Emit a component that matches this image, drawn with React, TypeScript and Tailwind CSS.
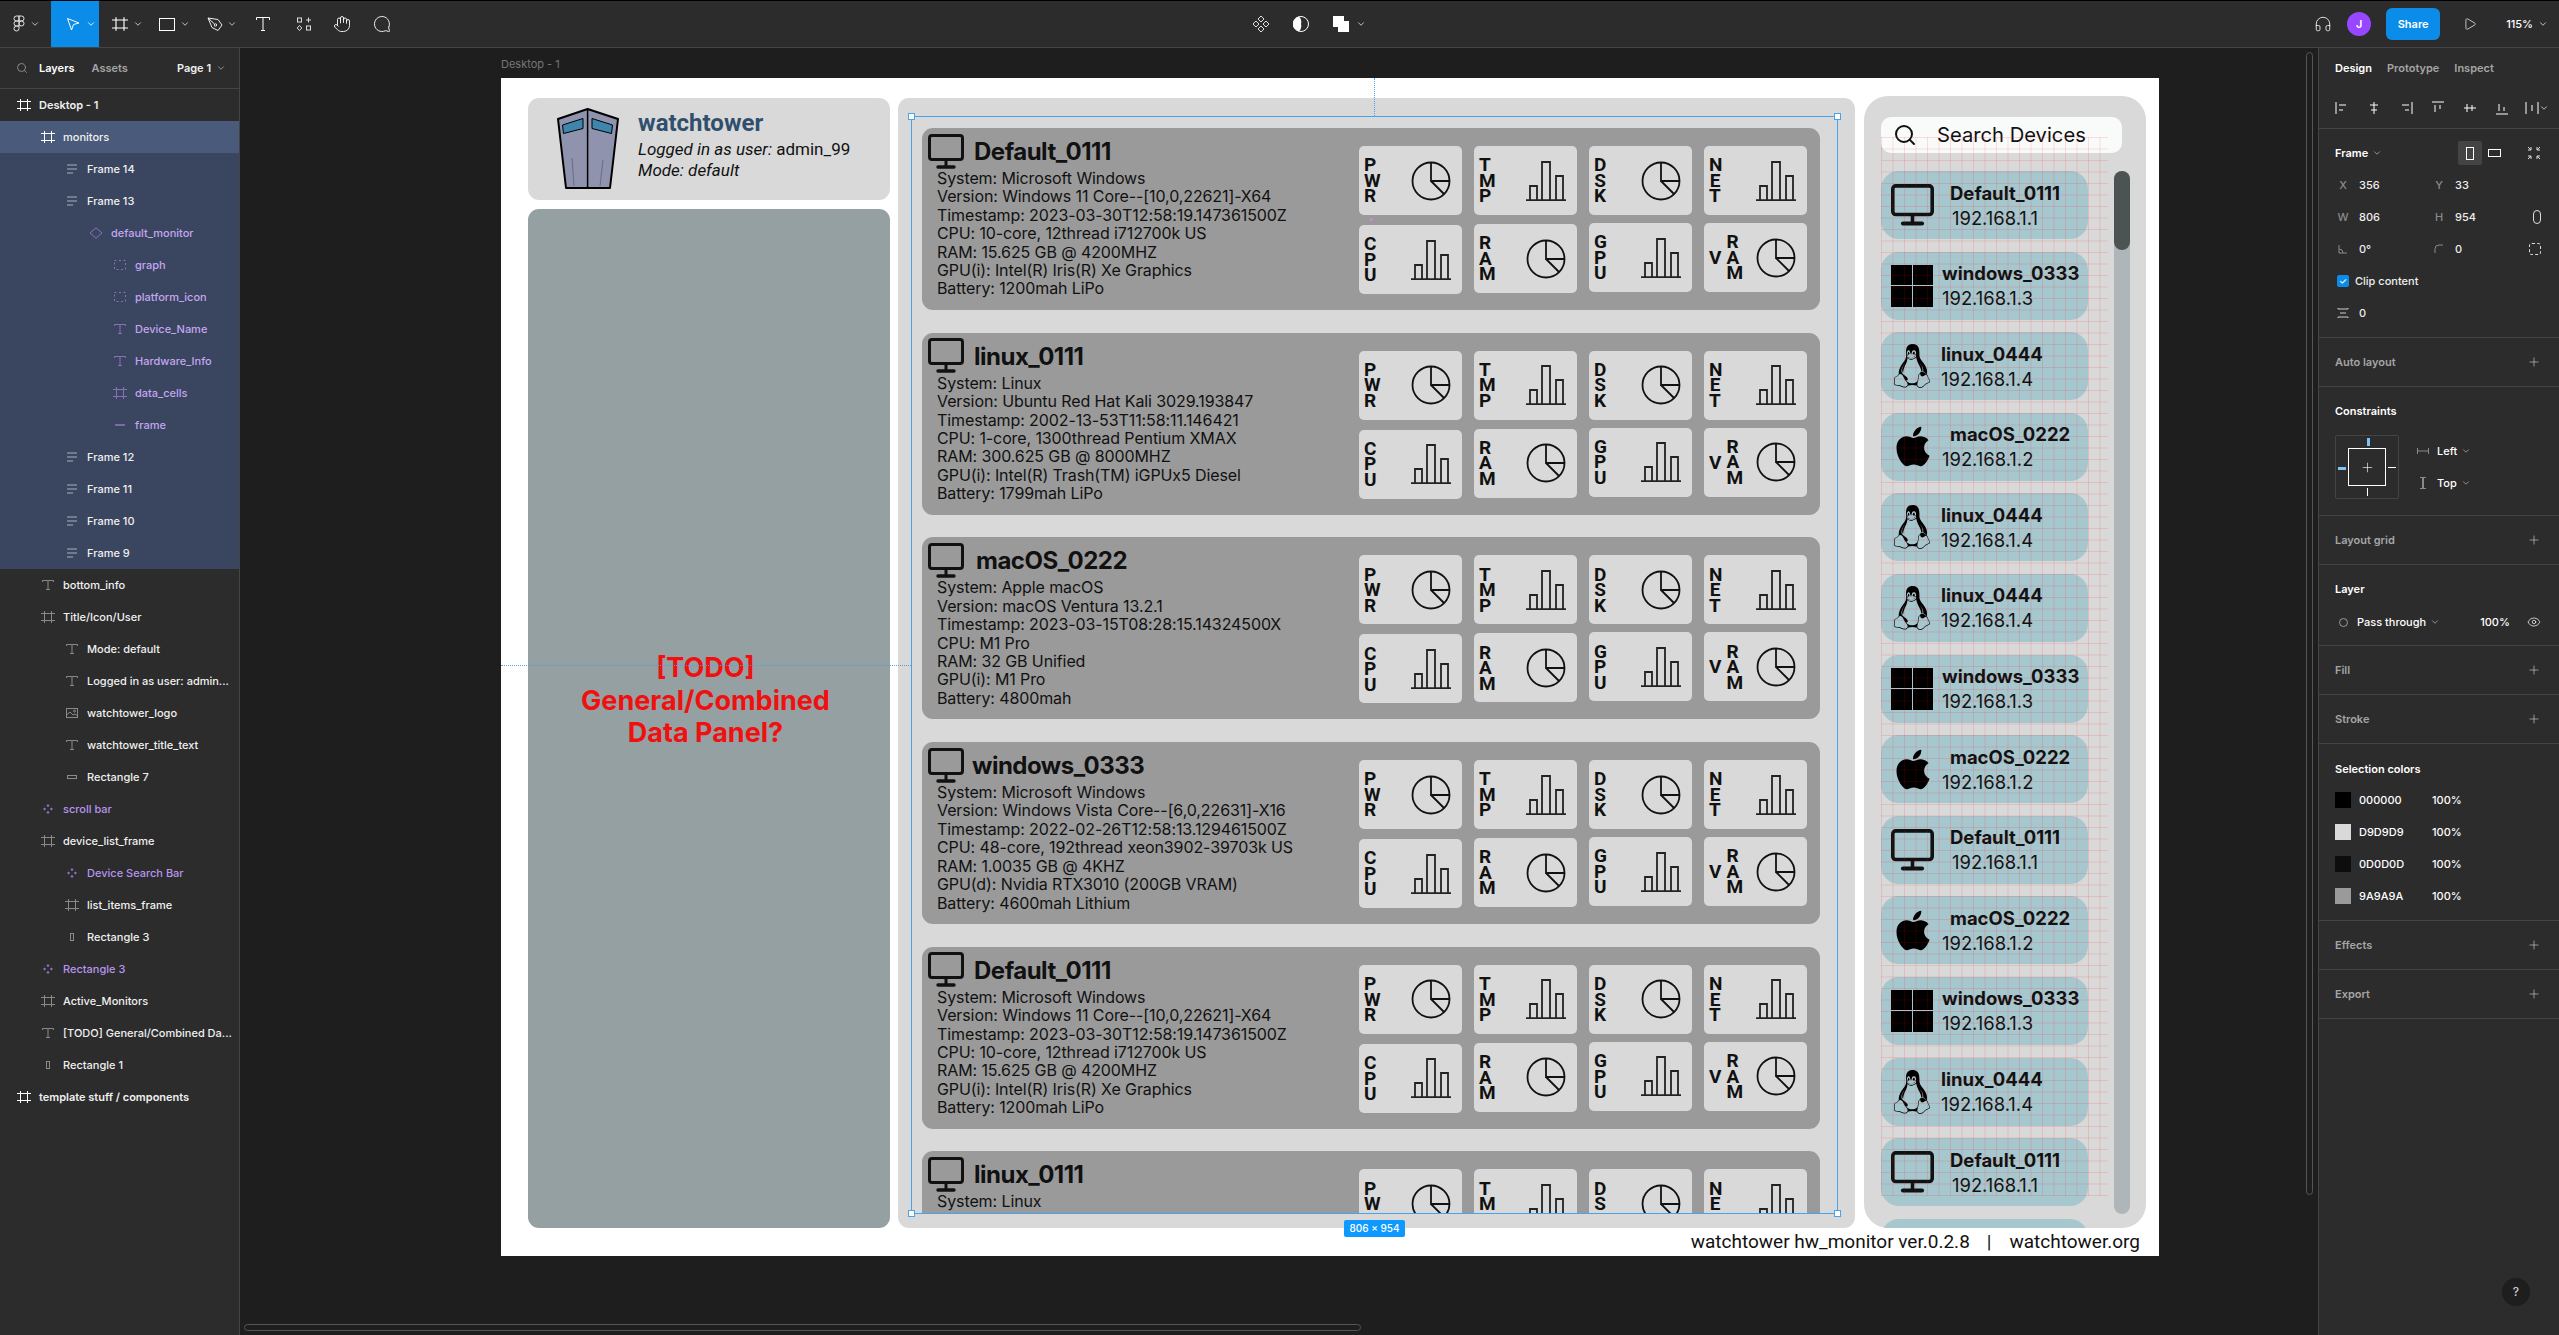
import { ReactNode } from "react";
import {
  ChevronDown,
  Eye,
  Hand,
  Headphones,
  MessageCircle,
  Play,
  Plus,
  Search,
} from "lucide-react";
import { FaApple } from "react-icons/fa";
import { SiLinux } from "react-icons/si";

type Platform = "default" | "windows" | "linux" | "mac";

const monitors = [
  {
    name: "Default_0111",
    gap: "ml-[10px]",
    lines: [
      "System: Microsoft Windows",
      "Version: Windows 11 Core--[10,0,22621]-X64",
      "Timestamp: 2023-03-30T12:58:19.147361500Z",
      "CPU: 10-core, 12thread i712700k US",
      "RAM: 15.625 GB @ 4200MHZ",
      "GPU(i): Intel(R) Iris(R) Xe Graphics",
      "Battery: 1200mah LiPo",
    ],
  },
  {
    name: "linux_0111",
    gap: "ml-[10px]",
    lines: [
      "System: Linux",
      "Version: Ubuntu Red Hat Kali 3029.193847",
      "Timestamp: 2002-13-53T11:58:11.146421",
      "CPU: 1-core, 1300thread Pentium XMAX",
      "RAM: 300.625 GB @ 8000MHZ",
      "GPU(i): Intel(R) Trash(TM) iGPUx5 Diesel",
      "Battery: 1799mah LiPo",
    ],
  },
  {
    name: "macOS_0222",
    gap: "ml-[12px]",
    lines: [
      "System: Apple macOS",
      "Version: macOS Ventura 13.2.1",
      "Timestamp: 2023-03-15T08:28:15.14324500X",
      "CPU: M1 Pro",
      "RAM: 32 GB Unified",
      "GPU(i): M1 Pro",
      "Battery: 4800mah",
    ],
  },
  {
    name: "windows_0333",
    gap: "ml-[8px]",
    lines: [
      "System: Microsoft Windows",
      "Version: Windows Vista Core--[6,0,22631]-X16",
      "Timestamp: 2022-02-26T12:58:13.129461500Z",
      "CPU: 48-core, 192thread xeon3902-39703k US",
      "RAM: 1.0035 GB @ 4KHZ",
      "GPU(d): Nvidia RTX3010 (200GB VRAM)",
      "Battery: 4600mah Lithium",
    ],
  },
  {
    name: "Default_0111",
    gap: "ml-[10px]",
    lines: [
      "System: Microsoft Windows",
      "Version: Windows 11 Core--[10,0,22621]-X64",
      "Timestamp: 2023-03-30T12:58:19.147361500Z",
      "CPU: 10-core, 12thread i712700k US",
      "RAM: 15.625 GB @ 4200MHZ",
      "GPU(i): Intel(R) Iris(R) Xe Graphics",
      "Battery: 1200mah LiPo",
    ],
  },
  {
    name: "linux_0111",
    gap: "ml-[10px]",
    lines: ["System: Linux"],
  },
];

const devices: { p: Platform; name: string; ip: string }[] = [
  { p: "default", name: "Default_0111", ip: "192.168.1.1" },
  { p: "windows", name: "windows_0333", ip: "192.168.1.3" },
  { p: "linux", name: "linux_0444", ip: "192.168.1.4" },
  { p: "mac", name: "macOS_0222", ip: "192.168.1.2" },
  { p: "linux", name: "linux_0444", ip: "192.168.1.4" },
  { p: "linux", name: "linux_0444", ip: "192.168.1.4" },
  { p: "windows", name: "windows_0333", ip: "192.168.1.3" },
  { p: "mac", name: "macOS_0222", ip: "192.168.1.2" },
  { p: "default", name: "Default_0111", ip: "192.168.1.1" },
  { p: "mac", name: "macOS_0222", ip: "192.168.1.2" },
  { p: "windows", name: "windows_0333", ip: "192.168.1.3" },
  { p: "linux", name: "linux_0444", ip: "192.168.1.4" },
  { p: "default", name: "Default_0111", ip: "192.168.1.1" },
  { p: "default", name: "", ip: "" },
];

type LayerKind = "frame" | "lines" | "diamond" | "dash" | "text" | "line" | "image" | "rect" | "tall" | "comp";

const layers: { label: string; level: number; kind: LayerKind; sel?: 1 | 2; purple?: boolean; bold?: boolean }[] = [
  { label: "Desktop - 1", level: 0, kind: "frame", bold: true },
  { label: "monitors", level: 1, kind: "frame", sel: 1 },
  { label: "Frame 14", level: 2, kind: "lines", sel: 2 },
  { label: "Frame 13", level: 2, kind: "lines", sel: 2 },
  { label: "default_monitor", level: 3, kind: "diamond", sel: 2, purple: true },
  { label: "graph", level: 4, kind: "dash", sel: 2, purple: true },
  { label: "platform_icon", level: 4, kind: "dash", sel: 2, purple: true },
  { label: "Device_Name", level: 4, kind: "text", sel: 2, purple: true },
  { label: "Hardware_Info", level: 4, kind: "text", sel: 2, purple: true },
  { label: "data_cells", level: 4, kind: "frame", sel: 2, purple: true },
  { label: "frame", level: 4, kind: "line", sel: 2, purple: true },
  { label: "Frame 12", level: 2, kind: "lines", sel: 2 },
  { label: "Frame 11", level: 2, kind: "lines", sel: 2 },
  { label: "Frame 10", level: 2, kind: "lines", sel: 2 },
  { label: "Frame 9", level: 2, kind: "lines", sel: 2 },
  { label: "bottom_info", level: 1, kind: "text" },
  { label: "Title/Icon/User", level: 1, kind: "frame" },
  { label: "Mode: default", level: 2, kind: "text" },
  { label: "Logged in as user: admin...", level: 2, kind: "text" },
  { label: "watchtower_logo", level: 2, kind: "image" },
  { label: "watchtower_title_text", level: 2, kind: "text" },
  { label: "Rectangle 7", level: 2, kind: "rect" },
  { label: "scroll bar", level: 1, kind: "comp", purple: true },
  { label: "device_list_frame", level: 1, kind: "frame" },
  { label: "Device Search Bar", level: 2, kind: "comp", purple: true },
  { label: "list_items_frame", level: 2, kind: "frame" },
  { label: "Rectangle 3", level: 2, kind: "tall" },
  { label: "Rectangle 3", level: 1, kind: "comp", purple: true },
  { label: "Active_Monitors", level: 1, kind: "frame" },
  { label: "[TODO] General/Combined Da...", level: 1, kind: "text" },
  { label: "Rectangle 1", level: 1, kind: "tall" },
  { label: "template stuff / components", level: 0, kind: "frame", bold: true },
];

function FrameGlyph({ className = "" }: { className?: string }) {
  return (
    <svg viewBox="0 0 14 12" className={`h-[12px] w-[14px] ${className}`} fill="none" stroke="currentColor" strokeWidth="1">
      <path d="M3.5 0v12M10.5 0v12M0 2.5h14M0 9.5h14" />
    </svg>
  );
}

function LayerIcon({ kind, bold, sel, purple }: { kind: LayerKind; bold?: boolean; sel?: 1 | 2; purple?: boolean }) {
  const color = bold ? "text-white" : purple ? "text-[#8a70b8]" : sel === 1 ? "text-white" : sel === 2 ? "text-[#aab0c0]" : "text-[#8a8a8a]";
  if (kind === "frame") return <FrameGlyph className={color} />;
  if (kind === "lines") {
    return (
      <svg viewBox="0 0 12 10" className={`h-[10px] w-[12px] ${color}`} fill="none" stroke="currentColor" strokeWidth="1.2">
        <path d="M1 1h10M1 5h10M1 9h6" />
      </svg>
    );
  }
  if (kind === "diamond") {
    return (
      <svg viewBox="0 0 14 12" className={`h-[12px] w-[14px] ${color}`} fill="none" stroke="currentColor">
        <path d="M7 .8 13 6 7 11.2 1 6z" />
      </svg>
    );
  }
  if (kind === "dash") {
    return (
      <svg viewBox="0 0 12 10" className={`h-[10px] w-[12px] ${color}`} fill="none" stroke="currentColor" strokeDasharray="2 2.5">
        <rect x=".5" y=".5" width="11" height="9" />
      </svg>
    );
  }
  if (kind === "text") {
    return (
      <svg viewBox="0 0 12 10" className={`h-[10px] w-[12px] ${color}`} fill="none" stroke="currentColor">
        <path d="M.5 2V.5h11V2M6 .5v9M4 9.5h4" />
      </svg>
    );
  }
  if (kind === "line") return <span className="h-[2px] w-[10px] bg-[#7d6aa6]" />;
  if (kind === "image") {
    return (
      <svg viewBox="0 0 12 10" className={`h-[10px] w-[12px] ${color}`} fill="none" stroke="currentColor">
        <rect x=".5" y=".5" width="11" height="9" />
        <path d="M.5 7 4 4l3 3 2-1 2.5 2" />
        <circle cx="8.5" cy="3" r="1" />
      </svg>
    );
  }
  if (kind === "rect") return <span className="h-[4px] w-[10px] border border-[#8a8a8a]" />;
  if (kind === "tall") return <span className="h-[8px] w-[4px] border border-[#8a8a8a]" />;
  return (
    <svg viewBox="0 0 12 12" className={`h-[12px] w-[12px] ${color}`} fill="currentColor">
      <path d="M6 1 7.6 2.6 6 4.2 4.4 2.6zM2.6 4.4 4.2 6 2.6 7.6 1 6zM9.4 4.4 11 6 9.4 7.6 7.8 6zM6 7.8 7.6 9.4 6 11 4.4 9.4z" />
    </svg>
  );
}

function Sidebar() {
  return (
    <aside className="flex w-[240px] shrink-0 flex-col border-r border-[#444] bg-[#2c2c2c] text-[11px] font-medium text-white">
      <div className="flex h-[41px] items-center border-b border-[#444] text-[#eee]">
        <Search className="ml-[16px] h-[12px] w-[12px] text-[#8a8a8a]" />
        <span className="ml-[11px] font-semibold text-white">Layers</span>
        <span className="ml-[17px] font-semibold text-[#a5a5a5]">Assets</span>
        <span className="ml-[49px] font-semibold">Page 1</span>
        <ChevronDown className="ml-[5px] h-[10px] w-[10px] text-[#a5a5a5]" />
      </div>
      <div>
        {layers.map((l, i) => {
          const bg = l.sel === 1 ? "bg-[#4a5a7a]" : l.sel === 2 ? "bg-[#3a4560]" : "";
          const text = l.purple ? (l.sel ? "text-[#c4a5f0]" : "text-[#b794f0]") : "text-[#f0f0f0]";
          const pad = ["pl-[16px]", "pl-[40px]", "pl-[64px]", "pl-[88px]", "pl-[112px]"][l.level];
          return (
            <div key={i} className={`flex h-[32px] items-center ${pad} ${bg}`}>
              <span className="flex w-[15px] items-center justify-center">
                <LayerIcon kind={l.kind} bold={l.bold} sel={l.sel} purple={l.purple} />
              </span>
              <span className={`ml-[8px] whitespace-nowrap ${text} ${l.bold ? "font-semibold" : ""}`}>{l.label}</span>
            </div>
          );
        })}
      </div>
    </aside>
  );
}

function Chev({ className = "" }: { className?: string }) {
  return <ChevronDown className={`h-[10px] w-[10px] text-[#ddd] ${className}`} />;
}

function Toolbar() {
  return (
    <header className="flex h-[48px] shrink-0 items-center border-y border-t-black border-b-[#444] bg-[#2c2c2c] text-white">
      <div className="flex h-full w-[51px] items-center pl-[13px]">
        <svg viewBox="0 0 12 18" className="h-[18px] w-[12px]" fill="none" stroke="#e5e5e5" strokeWidth="1">
          <path d="M6 1H3.5a2.5 2.5 0 0 0 0 5H6zM6 1h2.5a2.5 2.5 0 0 1 0 5H6zM6 6H3.5a2.5 2.5 0 0 0 0 5H6zM6 8.5a2.5 2.5 0 1 0 5 0 2.5 2.5 0 1 0-5 0zM6 11H3.5A2.5 2.5 0 1 0 6 13.5z" />
        </svg>
        <Chev className="ml-[5px]" />
      </div>
      <div className="flex h-full w-[48px] items-center bg-[#0c8ce9] pl-[15px]">
        <svg viewBox="0 0 14 14" className="h-[14px] w-[14px]" fill="none" stroke="#fff">
          <path d="M1.5 1.5 13 6 7.5 7.5 5.5 13z" />
        </svg>
        <Chev className="ml-[6px] text-white" />
      </div>
      <div className="flex h-full w-[47px] items-center pl-[13px]">
        <FrameGlyph className="h-[14px] w-[16px] text-white" />
        <Chev className="ml-[5px]" />
      </div>
      <div className="flex h-full w-[48px] items-center pl-[13px]">
        <span className="h-[13px] w-[16px] border border-white" />
        <Chev className="ml-[5px]" />
      </div>
      <div className="flex h-full w-[47px] items-center pl-[13px]">
        <svg viewBox="0 0 16 16" className="h-[16px] w-[16px]" fill="none" stroke="#eee">
          <path d="M1 2 11 3.5 15 9 11 14.5 5 11.5zM1 2l6.5 6" />
          <circle cx="8.5" cy="9" r="1.2" />
        </svg>
        <Chev className="ml-[4px]" />
      </div>
      <div className="flex h-full w-[44px] items-center justify-center">
        <svg viewBox="0 0 14 14" className="h-[14px] w-[14px]" fill="none" stroke="#fff">
          <path d="M.5 3V.5h13V3M7 .5v13M5 13.5h4" />
        </svg>
      </div>
      <div className="flex h-full w-[38px] items-center justify-center">
        <svg viewBox="0 0 16 14" className="h-[14px] w-[16px]" fill="none" stroke="#ddd">
          <rect x="1.5" y="1" width="4" height="4" />
          <rect x="10.5" y="9" width="4" height="4" />
          <path d="M12.5 .5v5M10 3h5M3.5 8.5 5.8 11 3.5 13.5 1.2 11z" />
        </svg>
      </div>
      <div className="flex h-full w-[38px] items-center justify-center">
        <Hand className="h-[18px] w-[18px]" strokeWidth={1.2} />
      </div>
      <div className="flex h-full w-[42px] items-center justify-center">
        <MessageCircle className="h-[18px] w-[18px] -scale-x-100" strokeWidth={1.2} />
      </div>
      <div className="ml-[838px] flex h-full w-[40px] items-center justify-center">
        <svg viewBox="0 0 18 18" className="h-[18px] w-[18px]" fill="none" stroke="#ddd">
          <path d="M9 1 12 4 9 7 6 4zM4 6l3 3-3 3-3-3zM14 6l3 3-3 3-3-3zM9 11l3 3-3 3-3-3z" />
        </svg>
      </div>
      <div className="flex h-full w-[40px] items-center justify-center">
        <svg viewBox="0 0 16 16" className="h-[16px] w-[16px]">
          <circle cx="8" cy="8" r="7.5" fill="none" stroke="#fff" />
          <path d="M6 .6a7.5 7.5 0 0 0 0 14.8A7.5 7.5 0 0 0 8 8 7.5 7.5 0 0 0 6 .6z" fill="#fff" />
        </svg>
      </div>
      <div className="flex h-full items-center pl-[12px]">
        <svg viewBox="0 0 16 16" className="h-[16px] w-[16px]" fill="#fff">
          <path d="M0 0h11v5h5v11H5v-5H0z" />
        </svg>
        <Chev className="ml-[7px]" />
      </div>
      <div className="ml-auto flex h-full items-center">
        <Headphones className="h-[18px] w-[18px]" strokeWidth={1.1} />
        <span className="ml-[15px] flex h-[24px] w-[24px] items-center justify-center rounded-full bg-[#9747ff] text-[11px] font-semibold">J</span>
        <span className="ml-[15px] flex h-[32px] w-[54px] items-center justify-center rounded-[6px] bg-[#0c8ce9] text-[11px] font-semibold">Share</span>
        <Play className="ml-[23px] h-[14px] w-[14px]" strokeWidth={1.2} />
        <span className="ml-[29px] text-[11px] font-medium">115%</span>
        <Chev className="ml-[5px] mr-[11px]" />
      </div>
    </header>
  );
}

function PropHeader({ label, dim, plus, h }: { label: string; dim?: boolean; plus?: boolean; h: string }) {
  return (
    <div className={`flex items-center border-b border-[#444] pl-[16px] pr-[18px] ${h}`}>
      <span className={`font-semibold ${dim ? "text-[#a5a5a5]" : "text-white"}`}>{label}</span>
      {plus && <Plus className="ml-auto h-[14px] w-[14px] text-[#ddd]" strokeWidth={1} />}
    </div>
  );
}

function PropRow({ a, b, lab, lab2, icon }: { a: string; b?: string; lab: ReactNode; lab2?: ReactNode; icon?: ReactNode }) {
  return (
    <div className="flex h-[32px] items-center">
      <span className="flex w-[24px] justify-center text-[#8a8a8a]">{lab}</span>
      <span className="w-[72px] pl-[4px] text-[#eee]">{a}</span>
      {lab2 !== undefined && <span className="flex w-[24px] justify-center text-[#8a8a8a]">{lab2}</span>}
      {b !== undefined && <span className="pl-[4px] text-[#eee]">{b}</span>}
      {icon && <span className="ml-auto mr-[18px] text-[#ddd]">{icon}</span>}
    </div>
  );
}

function RightPanel() {
  const alignPaths = ["M1 1v12M4 4h7M4 9h4", "M7 1v12M3 4h8M4 9h6", "M13 1v12M3 4h7M6 9h4", "M1 1h12M4 4v7M9 4v4", "M1 7h12M4 3v8M9 4v6", "M1 13h12M4 3v7M9 6v4"];
  return (
    <aside className="relative flex w-[241px] shrink-0 flex-col border-l border-[#444] bg-[#2c2c2c] text-[11px] font-medium text-white">
      <div className="flex h-[40px] items-center pl-[16px] font-semibold">
        <span>Design</span>
        <span className="ml-[15px] text-[#a5a5a5]">Prototype</span>
        <span className="ml-[15px] text-[#a5a5a5]">Inspect</span>
      </div>
      <div className="flex h-[41px] items-center gap-[18px] border-b border-[#444] pl-[16px] text-white">
        {alignPaths.map((d) => (
          <svg key={d} viewBox="0 0 14 14" className="h-[14px] w-[14px]" fill="none" stroke="currentColor">
            <path d={d} />
          </svg>
        ))}
        <div className="-ml-[2px] flex items-center">
          <svg viewBox="0 0 14 14" className="h-[14px] w-[14px]" fill="none" stroke="currentColor">
            <path d="M1 1v12M13 1v12M7 4v6" />
          </svg>
          <ChevronDown className="h-[10px] w-[10px] text-[#ddd]" />
        </div>
      </div>

      <div className="h-[209px] border-b border-[#444]">
        <div className="flex h-[40px] items-start pl-[16px] pt-[12px]">
          <span className="flex h-[24px] items-center font-semibold">Frame</span>
          <span className="flex h-[24px] items-center">
            <ChevronDown className="ml-[4px] h-[10px] w-[10px] text-[#a5a5a5]" />
          </span>
          <span className="ml-[76px] flex h-[24px] w-[24px] items-center justify-center rounded-[2px] bg-[#444]">
            <span className="h-[13px] w-[8px] border border-white" />
          </span>
          <span className="flex h-[24px] w-[24px] items-center justify-center">
            <span className="h-[8px] w-[13px] border border-white" />
          </span>
          <svg viewBox="0 0 14 14" className="ml-[21px] mt-[5px] h-[14px] w-[14px]" fill="none" stroke="#ddd">
            <path d="M1 1l3 3M4 1v3H1M13 1l-3 3M10 1v3h3M1 13l3-3M4 13v-3H1M13 13l-3-3M10 13v-3h3" />
          </svg>
        </div>
        <div className="pl-[12px]">
          <PropRow lab="X" a="356" lab2="Y" b="33" />
          <PropRow lab="W" a="806" lab2="H" b="954" icon={<span className="block h-[14px] w-[8px] rounded-[4px] border border-[#ddd]" />} />
          <PropRow
            lab={
              <svg viewBox="0 0 10 10" className="h-[10px] w-[10px]" fill="none" stroke="currentColor">
                <path d="M1 1v8h8M1 5a4 4 0 0 1 4 4" />
              </svg>
            }
            a="0°"
            lab2={
              <svg viewBox="0 0 10 10" className="h-[10px] w-[10px]" fill="none" stroke="currentColor">
                <path d="M1 9V5a4 4 0 0 1 4-4h4" />
              </svg>
            }
            b="0"
            icon={<span className="block h-[12px] w-[12px] rounded-[3px] border border-dashed border-[#ddd]" />}
          />
          <div className="flex h-[32px] items-center">
            <span className="ml-[6px] flex h-[12px] w-[12px] items-center justify-center rounded-[2px] bg-[#0c8ce9] text-[9px] text-white">✓</span>
            <span className="ml-[6px] text-[#eee]">Clip content</span>
          </div>
          <PropRow
            lab={
              <svg viewBox="0 0 12 12" className="h-[12px] w-[12px]" fill="none" stroke="#ccc">
                <path d="M1 1v1h10V1M3 6h6M1 11v-1h10v1" />
              </svg>
            }
            a="0"
          />
        </div>
      </div>

      <PropHeader label="Auto layout" dim plus h="h-[49px]" />
      <div className="h-[129px] border-b border-[#444] pl-[16px]">
        <div className="flex h-[48px] items-center font-semibold">Constraints</div>
        <div className="flex items-start">
          <div className="relative flex h-[64px] w-[64px] items-center justify-center rounded-[2px] border border-[#444]">
            <div className="flex h-[38px] w-[38px] items-center justify-center border border-white">
              <Plus className="h-[15px] w-[15px]" strokeWidth={1} />
            </div>
            <span className="absolute left-[2px] top-[31px] h-[3px] w-[8px] bg-[#7cc4f8]" />
            <span className="absolute right-[2px] top-[31px] h-[1px] w-[8px] bg-white" />
            <span className="absolute left-[31px] top-[2px] h-[8px] w-[3px] bg-[#7cc4f8]" />
            <span className="absolute bottom-[2px] left-[31px] h-[8px] w-[1px] bg-white" />
          </div>
          <div className="ml-[18px] flex flex-col">
            <div className="flex h-[32px] items-center">
              <svg viewBox="0 0 12 12" className="h-[12px] w-[12px]" fill="none" stroke="#8a8a8a">
                <path d="M.5 3v6M11.5 3v6M.5 6h11" />
              </svg>
              <span className="ml-[8px]">Left</span>
              <ChevronDown className="ml-[4px] h-[10px] w-[10px] text-[#a5a5a5]" />
            </div>
            <div className="flex h-[32px] items-center">
              <svg viewBox="0 0 12 12" className="h-[12px] w-[12px]" fill="none" stroke="#8a8a8a">
                <path d="M3 .5h6M3 11.5h6" />
                <path d="M6 .5v11" strokeWidth="2" />
              </svg>
              <span className="ml-[8px]">Top</span>
              <ChevronDown className="ml-[4px] h-[10px] w-[10px] text-[#a5a5a5]" />
            </div>
          </div>
        </div>
      </div>

      <PropHeader label="Layout grid" dim plus h="h-[49px]" />
      <div className="h-[81px] border-b border-[#444] pl-[16px] pr-[18px]">
        <div className="flex h-[49px] items-center font-semibold">Layer</div>
        <div className="flex h-[16px] items-center">
          <span className="ml-[4px] h-[9px] w-[9px] rounded-full border border-[#999]" />
          <span className="ml-[9px]">Pass through</span>
          <ChevronDown className="ml-[4px] h-[10px] w-[10px] text-[#a5a5a5]" />
          <span className="ml-[40px]">100%</span>
          <Eye className="ml-auto h-[14px] w-[14px]" strokeWidth={1.2} />
        </div>
      </div>
      <PropHeader label="Fill" dim plus h="h-[49px]" />
      <PropHeader label="Stroke" dim plus h="h-[49px]" />

      <div className="h-[177px] border-b border-[#444] pl-[16px]">
        <div className="h-[40px] pt-[18px] font-semibold leading-[14px]">Selection colors</div>
        {[
          ["000000", "bg-black"],
          ["D9D9D9", "bg-[#d9d9d9]"],
          ["0D0D0D", "bg-[#0d0d0d]"],
          ["9A9A9A", "bg-[#9a9a9a]"],
        ].map(([hex, bg]) => (
          <div key={hex} className="flex h-[32px] items-center">
            <span className={`h-[16px] w-[16px] ${bg}`} />
            <span className="ml-[8px] w-[73px]">{hex}</span>
            <span>100%</span>
          </div>
        ))}
      </div>
      <PropHeader label="Effects" dim plus h="h-[49px]" />
      <PropHeader label="Export" dim plus h="h-[49px]" />
      <span className="absolute bottom-[29px] right-[29px] flex h-[28px] w-[28px] items-center justify-center rounded-full bg-[#1e1e1e] text-[12px] text-[#ccc]">?</span>
    </aside>
  );
}

function MonitorIcon({ className = "" }: { className?: string }) {
  return (
    <svg viewBox="0 0 36 35" className={className} fill="none" stroke="#111">
      <rect x="1.5" y="1.5" width="33" height="24" rx="2.5" strokeWidth="3" />
      <path d="M18 26v6" strokeWidth="3" />
      <path d="M10 33h16" strokeWidth="3.4" strokeLinecap="round" />
    </svg>
  );
}

function Pie() {
  return (
    <svg viewBox="0 0 40 40" className="h-[40px] w-[40px]" fill="none" stroke="#111" strokeWidth="1.8">
      <circle cx="20" cy="20" r="18.5" />
      <path d="M20 1.5V20H38.5M20 20 33 33" />
    </svg>
  );
}

function Bars() {
  return (
    <svg viewBox="0 0 42 40" className="h-[40px] w-[42px]" fill="none" stroke="#222" strokeWidth="1.8">
      <path d="M5 39V25h7v14M17 39V1h8v38M31 39V15h7v24" />
      <path d="M1 39.2h40" strokeWidth="2" />
    </svg>
  );
}

function Cell({ label, chart, mt, vram }: { label: string; chart: "pie" | "bars"; mt: string; vram?: boolean }) {
  return (
    <div className={`flex h-[69px] w-[103px] items-center rounded-[5px] bg-[#d9d9d9] ${mt}`}>
      <div className="flex w-[48px] shrink-0 items-center pl-[5px] text-[19px] font-bold text-[#111]">
        {vram && <span className="mr-[5px] leading-none">V</span>}
        <div className="w-[12px] whitespace-pre-line text-center leading-[15.5px]">{label.split("").join("\n")}</div>
      </div>
      <div className={`ml-auto ${chart === "pie" ? "mr-[11px]" : "mr-[10px]"}`}>{chart === "pie" ? <Pie /> : <Bars />}</div>
    </div>
  );
}

function MonitorCard({ name, gap, lines }: { name: string; gap: string; lines: string[] }) {
  return (
    <div className="flex h-[182px] w-[898px] shrink-0 rounded-[11px] bg-[#9a9a9a] font-['Inter',sans-serif] text-[#111]">
      <div className="w-[437px] shrink-0 pl-[6px] pt-[5px]">
        <div className="flex h-[36px] items-center">
          <MonitorIcon className="h-[35px] w-[36px] shrink-0" />
          <span className={`${gap} mt-[2px] text-[24px] font-bold leading-none tracking-[-0.5px]`}>{name}</span>
        </div>
        <div className="pl-[9px] text-[16px] leading-[18.4px] tracking-[-0.1px]">
          {lines.map((l) => (
            <div key={l} className="whitespace-nowrap">{l}</div>
          ))}
        </div>
      </div>
      <div className="flex gap-[12px] pt-[18px] font-['Roboto',sans-serif]">
        <div className="flex flex-col">
          <Cell label="PWR" chart="pie" mt="" />
          <Cell label="CPU" chart="bars" mt="mt-[10px]" />
        </div>
        <div className="flex flex-col">
          <Cell label="TMP" chart="bars" mt="" />
          <Cell label="RAM" chart="pie" mt="mt-[9px]" />
        </div>
        <div className="flex flex-col">
          <Cell label="DSK" chart="pie" mt="" />
          <Cell label="GPU" chart="bars" mt="mt-[8px]" />
        </div>
        <div className="flex flex-col">
          <Cell label="NET" chart="bars" mt="" />
          <Cell label="RAM" chart="pie" mt="mt-[8px]" vram />
        </div>
      </div>
    </div>
  );
}

function PlatformIcon({ p }: { p: Platform }) {
  if (p === "default") return <MonitorIcon className="ml-[10px] h-[42px] w-[43px] shrink-0" />;
  if (p === "windows") {
    return (
      <div className="ml-[10px] grid h-[42px] w-[42px] shrink-0 grid-cols-2 gap-[1px]">
        <span className="bg-black" />
        <span className="bg-black" />
        <span className="bg-black" />
        <span className="bg-black" />
      </div>
    );
  }
  if (p === "linux") return <SiLinux className="ml-[9px] h-[44px] w-[44px] shrink-0 text-black" />;
  return <FaApple className="ml-[14px] h-[45px] w-[36px] shrink-0 text-black" />;
}

function DeviceRow({ p, name, ip }: { p: Platform; name: string; ip: string }) {
  const nameMl = p === "default" ? "ml-[16px]" : p === "windows" ? "ml-[9px]" : p === "linux" ? "ml-[7px]" : "ml-[19px]";
  const ipMl = p === "default" ? "ml-[18px]" : p === "windows" ? "ml-[9px]" : p === "linux" ? "ml-[7px]" : "ml-[11px]";
  return (
    <div className="flex h-[68px] w-[207px] shrink-0 items-center rounded-[18px] bg-[#a7c7cf] font-['Inter',sans-serif] text-[#111]">
      {name && <PlatformIcon p={p} />}
      {name && (
        <div className="flex flex-col pt-[1px]">
          <span className={`${nameMl} whitespace-nowrap text-[18.5px] font-bold leading-[25px]`}>{name}</span>
          <span className={`${ipMl} whitespace-nowrap text-[18.4px] leading-[25px]`}>{ip}</span>
        </div>
      )}
    </div>
  );
}

function Handle({ className }: { className: string }) {
  return <span className={`absolute h-[7px] w-[7px] border border-[#4aa3e8] bg-white ${className}`} />;
}

function DesignFrame() {
  return (
    <div className="relative flex h-[1178px] w-[1658px] flex-col bg-white font-['Inter',sans-serif]">
      <span className="absolute -top-[22px] left-0 text-[11px] text-[#777]">Desktop - 1</span>
      <div className="flex h-[1150px] pl-[27px] pt-[20px]">
        <div className="flex w-[362px] shrink-0 flex-col gap-[9px]">
          <div className="flex h-[102px] items-start rounded-[11px] bg-[#d9d9d9] pl-[29px] pt-[10px]">
            <svg viewBox="0 0 62 81" className="h-[81px] w-[62px] shrink-0">
              <path d="M30.6 1 1 11l8 69h44l8-69z" fill="#8f93ad" stroke="#000" strokeWidth="2" strokeLinejoin="round" />
              <path d="M30.6 1v79" stroke="#000" strokeWidth="1.5" />
              <path d="M5.5 17 26 10.5v10L6.5 25.5z" fill="#3f86ad" stroke="#000" />
              <path d="M35 10.5 55.5 17 54.5 25.5 35 20.5z" fill="#3f86ad" stroke="#000" />
              <path d="M15 50 17 78M46 52 43 78" stroke="#5f6278" strokeWidth=".8" fill="none" />
            </svg>
            <div className="ml-[19px] flex flex-col font-['Roboto',sans-serif] text-[#111]">
              <span className="text-[24px] font-bold leading-[30px] text-[#304f6d]">watchtower</span>
              <span className="mt-[1px] whitespace-nowrap text-[17px] leading-[21px]">
                <i>Logged in as user:</i> admin_99
              </span>
              <span className="whitespace-nowrap text-[17px] italic leading-[21px]">Mode: default</span>
            </div>
          </div>
          <div className="flex h-[1019px] flex-col items-center rounded-[11px] bg-[#94a0a2] pr-[7px] pt-[443px] text-center font-bold text-[#f01010]">
            <span className="text-[27px] leading-[32.6px]">[TODO]</span>
            <span className="text-[27px] leading-[32.6px]">General/Combined</span>
            <span className="text-[27px] leading-[32.6px]">Data Panel?</span>
          </div>
        </div>

        <div className="ml-[8px] h-[1130px] w-[957px] shrink-0 rounded-[11px] bg-[#d9d9d9] pl-[13px] pt-[18px]">
          <div className="flex h-[1098px] w-[927px] flex-col gap-[22.7px] overflow-hidden pl-[11px] pt-[12px]">
            {monitors.map((m, i) => (
              <MonitorCard key={i} {...m} />
            ))}
          </div>
        </div>

        <div className="relative -mt-[2px] ml-[9px] flex h-[1132px] w-[282px] shrink-0 flex-col overflow-hidden rounded-[24px] bg-[#d9d9d9] pl-[17px] pt-[21px]">
          <div className="flex h-[36px] w-[241px] shrink-0 items-center rounded-[10px] bg-[#f9fbfa] pl-[12px] text-[20.2px] text-[#111]">
            <Search className="h-[24px] w-[24px]" strokeWidth={2} />
            <span className="ml-[20px]">Search Devices</span>
          </div>
          <div className="mt-[18px] flex">
            <div className="flex w-[207px] flex-col gap-[12.6px]">
              {devices.map((d, i) => (
                <DeviceRow key={i} {...d} />
              ))}
            </div>
            <div className="ml-[26px] h-[1043px] w-[16px] shrink-0 rounded-[8px] bg-[#aeb6b9]">
              <div className="h-[79px] rounded-[8px] bg-[#4b5452]" />
            </div>
          </div>
          <div className="pointer-events-none absolute left-[17px] top-[41px] h-[1059px] w-[227px] bg-[linear-gradient(to_right,rgba(255,0,0,0.13)_1px,transparent_1px),linear-gradient(to_bottom,rgba(255,0,0,0.13)_1px,transparent_1px)] bg-[size:11.5px_11.5px]" />
        </div>
      </div>

      <div className="flex h-[28px] items-center justify-end whitespace-nowrap pr-[19px] font-['Roboto',sans-serif] text-[19px] text-[#111]">
        <span>watchtower hw_monitor ver.0.2.8</span>
        <span className="ml-[17px]">|</span>
        <span className="ml-[18px]">watchtower.org</span>
      </div>

      {/* selection overlay */}
      <div className="pointer-events-none absolute left-[410px] top-[38px] h-[1098px] w-[927px] border-[1.5px] border-[#4aa3e8]">
        <Handle className="-left-[4px] -top-[4px]" />
        <Handle className="-right-[4px] -top-[4px]" />
        <Handle className="-bottom-[4px] -left-[4px]" />
        <Handle className="-bottom-[4px] -right-[4px]" />
        <span className="absolute -bottom-[24px] left-[432px] flex h-[17px] w-[61px] items-center justify-center rounded-[2px] bg-[#0d99ff] text-[10px] font-medium text-white">
          806 × 954
        </span>
      </div>
      <span className="pointer-events-none absolute left-0 top-[587px] h-0 w-[410px] border-t border-dotted border-[#4aa3e8]" />
      <span className="pointer-events-none absolute left-[873px] top-0 h-[38px] w-0 border-l border-dotted border-[#4aa3e8]" />
      <span className="pointer-events-none absolute left-[869px] top-[140px] h-[3px] w-[3px] rounded-full bg-[#e080e0]" />
    </div>
  );
}

export default function App() {
  return (
    <div className="flex h-[1335px] w-[2559px] flex-col overflow-hidden bg-[#1e1e1e] font-['Inter',sans-serif]">
      <Toolbar />
      <div className="flex min-h-0 flex-1">
        <Sidebar />
        <main className="relative min-w-0 flex-1 pl-[261px] pt-[30px]">
          <DesignFrame />
          <div className="absolute bottom-[4px] left-[4px] h-[7px] w-[1117px] rounded-full border border-[#555]" />
          <div className="absolute right-[5px] top-[4px] h-[1143px] w-[7px] rounded-full border border-[#555]" />
        </main>
        <RightPanel />
      </div>
    </div>
  );
}
